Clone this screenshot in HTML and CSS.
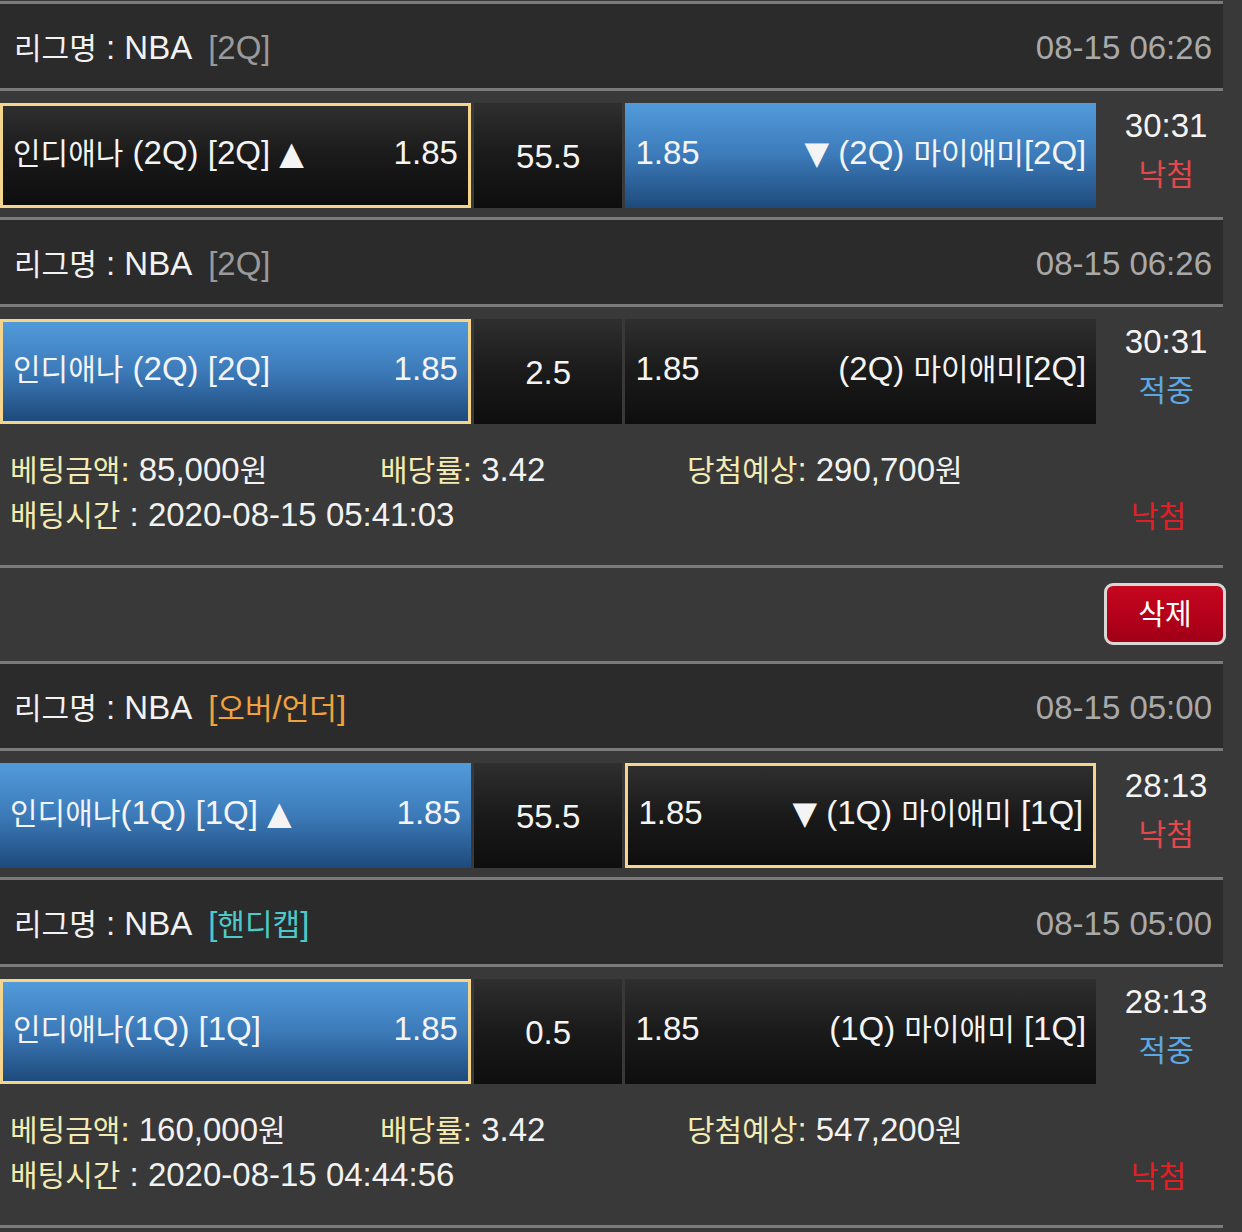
FILE: index.html
```html
<!DOCTYPE html>
<html lang="ko">
<head>
<meta charset="utf-8">
<title>베팅내역</title>
<link rel="stylesheet" href="styles.css">
</head>
<body>
<div class="page">

  <section class="bet">
    <div class="game">
      <div class="ghead">
        <div class="league"><span class="k">리그명</span> : NBA<span class="tag tag-q">[2Q]</span></div>
        <div class="gdate">08-15 06:26</div>
      </div>
      <div class="grow">
        <div class="cell side dark picked">
          <span class="team"><span class="k">인디애나</span> (2Q) [2Q] <span class="arr">▲</span></span>
          <span class="odd">1.85</span>
        </div>
        <div class="cell mid dark">55.5</div>
        <div class="cell side blue">
          <span class="odd">1.85</span>
          <span class="team"><span class="arr">▼</span> (2Q) <span class="k">마이애미</span>[2Q]</span>
        </div>
        <div class="gstat">
          <span class="clock">30:31</span>
          <span class="k res lose">낙첨</span>
        </div>
      </div>
    </div>

    <div class="game">
      <div class="ghead">
        <div class="league"><span class="k">리그명</span> : NBA<span class="tag tag-q">[2Q]</span></div>
        <div class="gdate">08-15 06:26</div>
      </div>
      <div class="grow">
        <div class="cell side blue picked">
          <span class="team"><span class="k">인디애나</span> (2Q) [2Q]</span>
          <span class="odd">1.85</span>
        </div>
        <div class="cell mid dark">2.5</div>
        <div class="cell side dark">
          <span class="odd">1.85</span>
          <span class="team">(2Q) <span class="k">마이애미</span>[2Q]</span>
        </div>
        <div class="gstat">
          <span class="clock">30:31</span>
          <span class="k res win">적중</span>
        </div>
      </div>
    </div>

    <div class="summary">
      <div class="srow">
        <div class="sc sc1"><span class="lbl"><span class="k">베팅금액</span>:</span> 85,000<span class="k">원</span></div>
        <div class="sc sc2"><span class="lbl"><span class="k">배당률</span>:</span> 3.42</div>
        <div class="sc"><span class="lbl"><span class="k">당첨예상</span>:</span> 290,700<span class="k">원</span></div>
      </div>
      <div class="srow between">
        <div class="sc"><span class="lbl k">배팅시간</span> : 2020-08-15 05:41:03</div>
        <div class="k sres">낙첨</div>
      </div>
    </div>
  </section>

  <div class="delrow">
    <button class="delbtn" type="button">삭제</button>
  </div>

  <section class="bet">
    <div class="game">
      <div class="ghead">
        <div class="league"><span class="k">리그명</span> : NBA<span class="tag tag-ou">[<span class="k">오버</span>/<span class="k">언더</span>]</span></div>
        <div class="gdate">08-15 05:00</div>
      </div>
      <div class="grow">
        <div class="cell side blue">
          <span class="team"><span class="k">인디애나</span>(1Q) [1Q] <span class="arr">▲</span></span>
          <span class="odd">1.85</span>
        </div>
        <div class="cell mid dark">55.5</div>
        <div class="cell side dark picked">
          <span class="odd">1.85</span>
          <span class="team"><span class="arr">▼</span> (1Q) <span class="k">마이애미</span> [1Q]</span>
        </div>
        <div class="gstat">
          <span class="clock">28:13</span>
          <span class="k res lose">낙첨</span>
        </div>
      </div>
    </div>

    <div class="game">
      <div class="ghead">
        <div class="league"><span class="k">리그명</span> : NBA<span class="tag tag-hc">[<span class="k">핸디캡</span>]</span></div>
        <div class="gdate">08-15 05:00</div>
      </div>
      <div class="grow">
        <div class="cell side blue picked">
          <span class="team"><span class="k">인디애나</span>(1Q) [1Q]</span>
          <span class="odd">1.85</span>
        </div>
        <div class="cell mid dark">0.5</div>
        <div class="cell side dark">
          <span class="odd">1.85</span>
          <span class="team">(1Q) <span class="k">마이애미</span> [1Q]</span>
        </div>
        <div class="gstat">
          <span class="clock">28:13</span>
          <span class="k res win">적중</span>
        </div>
      </div>
    </div>

    <div class="summary">
      <div class="srow">
        <div class="sc sc1"><span class="lbl"><span class="k">베팅금액</span>:</span> 160,000<span class="k">원</span></div>
        <div class="sc sc2"><span class="lbl"><span class="k">배당률</span>:</span> 3.42</div>
        <div class="sc"><span class="lbl"><span class="k">당첨예상</span>:</span> 547,200<span class="k">원</span></div>
      </div>
      <div class="srow between">
        <div class="sc"><span class="lbl k">배팅시간</span> : 2020-08-15 04:44:56</div>
        <div class="k sres">낙첨</div>
      </div>
    </div>
  </section>

</div>
</body>
</html>
```

FILE: styles.css
```css
html, body {
  margin: 0;
  padding: 0;
  background: #393939;
}

body {
  font-family: "Liberation Sans", "Noto Sans CJK KR", sans-serif;
  font-size: 33px;
  color: #f2f2f2;
}

.k {
  font-family: "Noto Sans CJK KR", sans-serif;
  font-size: 30px;
  line-height: 1;
}

.page {
  width: 1242px;
  padding-top: 1px;
}

.bet {
  width: 1223px;
  border-bottom: 3px solid #7b7b7b;
}

.game {
  border-top: 3px solid #7b7b7b;
}

.ghead {
  height: 84px;
  box-sizing: border-box;
  padding: 4px 11px 0 14px;
  background: #2b2b2b;
  display: flex;
  align-items: center;
  justify-content: space-between;
  line-height: 40px;
}

.league {
  color: #f2f2f2;
}

.tag {
  margin-left: 16px;
}

.tag-q { color: #9a9a9a; }
.tag-ou { color: #f0a23e; }
.tag-hc { color: #4ec9c9; }

.gdate {
  color: #a9a9a9;
}

.grow {
  display: flex;
  gap: 3px;
  padding: 12px 0 9px;
  border-top: 3px solid #7b7b7b;
}

.cell {
  height: 105px;
  box-sizing: border-box;
  display: flex;
  align-items: center;
  line-height: 40px;
  color: #f4f4f4;
}

.side {
  width: 472px;
  padding: 0 10px 5px;
  justify-content: space-between;
  white-space: nowrap;
}

.mid {
  width: 149px;
  justify-content: center;
  padding-top: 3px;
}

.dark {
  background: linear-gradient(to bottom, #2f2f2f 0%, #1a1a1a 50%, #0e0e0e 100%);
}

.blue {
  background: linear-gradient(to bottom, #529bdb 0%, #3c7ab9 50%, #1e4a7b 100%);
}

.picked {
  border: 3px solid #f4d58b;
}

.arr {
  font-family: "DejaVu Sans", sans-serif;
  font-size: 32px;
  line-height: 1;
}

.gstat {
  width: 124px;
  box-sizing: border-box;
  padding-left: 10px;
  display: flex;
  flex-direction: column;
  align-items: center;
  line-height: 46px;
}

.clock {
  color: #f4f4f4;
}

.res {
  line-height: 46px;
}

.res.lose { color: #e2474c; }
.res.win { color: #5ea8e2; }

.summary {
  padding: 14px 37px 28px 10px;
  line-height: 45px;
}

.srow {
  display: flex;
  white-space: nowrap;
}

.srow.between {
  justify-content: space-between;
}

.sc1 { width: 370px; }
.sc2 { width: 307px; }

.lbl {
  color: #f3ebb3;
}

.sres {
  color: #e31e24;
  line-height: 45px;
}

.delrow {
  height: 93px;
  box-sizing: border-box;
  padding: 15px 16px 0 0;
  display: flex;
  justify-content: flex-end;
  align-items: flex-start;
}

.delbtn {
  width: 122px;
  height: 62px;
  box-sizing: border-box;
  border: 3px solid #d9d6d6;
  border-radius: 9px;
  background: linear-gradient(to bottom, #c6061f 0%, #b2001a 60%, #a00017 100%);
  color: #ffffff;
  font-family: "Noto Sans CJK KR", sans-serif;
  font-size: 29px;
  line-height: 50px;
  padding: 0 0 4px;
  cursor: pointer;
}
```
